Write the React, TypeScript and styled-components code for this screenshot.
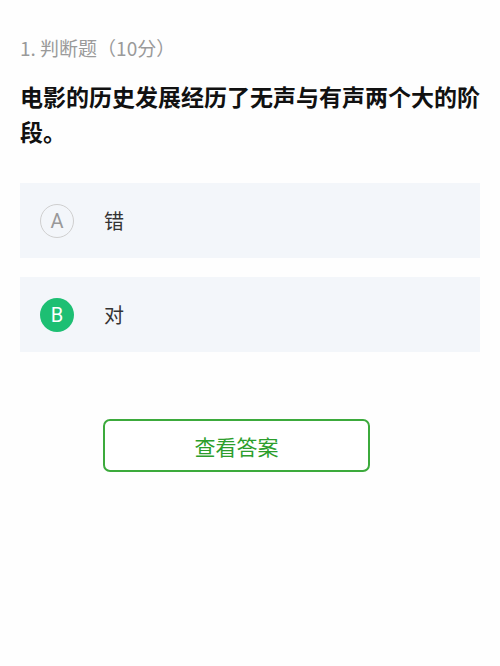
import React from "react";
import styled, { createGlobalStyle } from "styled-components";

const GlobalStyle = createGlobalStyle`
  html, body {
    margin: 0;
    padding: 0;
    background: #fefefe;
  }
  body {
    font-family: "Noto Sans CJK SC", "Noto Sans", sans-serif;
  }
`;

const options = [
  { key: "A", text: "错", selected: false },
  { key: "B", text: "对", selected: true },
];

function App() {
  return (
    <>
      <GlobalStyle />
      <StyledPage>
        <StyledTitle>1. 判断题（10分）</StyledTitle>
        <StyledQuestion>电影的历史发展经历了无声与有声两个大的阶段。</StyledQuestion>
        <StyledOptionList>
          {options.map((el) => (
            <StyledOption key={el.key}>
              <StyledBadge $selected={el.selected}>{el.key}</StyledBadge>
              <StyledOptionText>{el.text}</StyledOptionText>
            </StyledOption>
          ))}
        </StyledOptionList>
        <StyledButtonRow>
          <StyledButton>查看答案</StyledButton>
        </StyledButtonRow>
      </StyledPage>
    </>
  );
}

export default App;

const StyledPage = styled.div`
  width: 500px;
  height: 666px;
  box-sizing: border-box;
  padding: 34px 20px 0;
`;

const StyledTitle = styled.div`
  font-size: 19px;
  line-height: 28px;
  color: #9a9a9a;
`;

const StyledQuestion = styled.div`
  margin-top: 17px;
  font-size: 23px;
  line-height: 35px;
  font-weight: 700;
  color: #111;
`;

const StyledOptionList = styled.ul`
  list-style: none;
  margin: 34px 0 0;
  padding: 0;
  display: flex;
  flex-direction: column;
  gap: 19px;
`;

const StyledOption = styled.li`
  height: 75px;
  background: #f3f6fa;
  display: flex;
  align-items: center;
  padding-left: 20px;
`;

const StyledBadge = styled.span<{ $selected: boolean }>`
  width: 34px;
  height: 34px;
  box-sizing: border-box;
  border-radius: 50%;
  display: flex;
  align-items: center;
  justify-content: center;
  font-family: "Roboto", "Noto Sans", sans-serif;
  font-size: 20px;
  font-weight: 400;
  color: ${(p) => (p.$selected ? "#fff" : "#999")};
  background: ${(p) => (p.$selected ? "#1dbf73" : "transparent")};
  border: ${(p) => (p.$selected ? "none" : "1.5px solid #cfcfcf")};
`;

const StyledOptionText = styled.span`
  margin-left: 30px;
  font-size: 20px;
  color: #333;
`;

const StyledButtonRow = styled.div`
  margin-top: 67px;
  padding-left: 83px;
`;

const StyledButton = styled.button`
  width: 267px;
  height: 53px;
  border: 2px solid #3caa3c;
  border-radius: 7px;
  background: #fff;
  color: #2c9e2c;
  font-family: "Noto Sans CJK SC", sans-serif;
  font-size: 21px;
  cursor: pointer;
`;
